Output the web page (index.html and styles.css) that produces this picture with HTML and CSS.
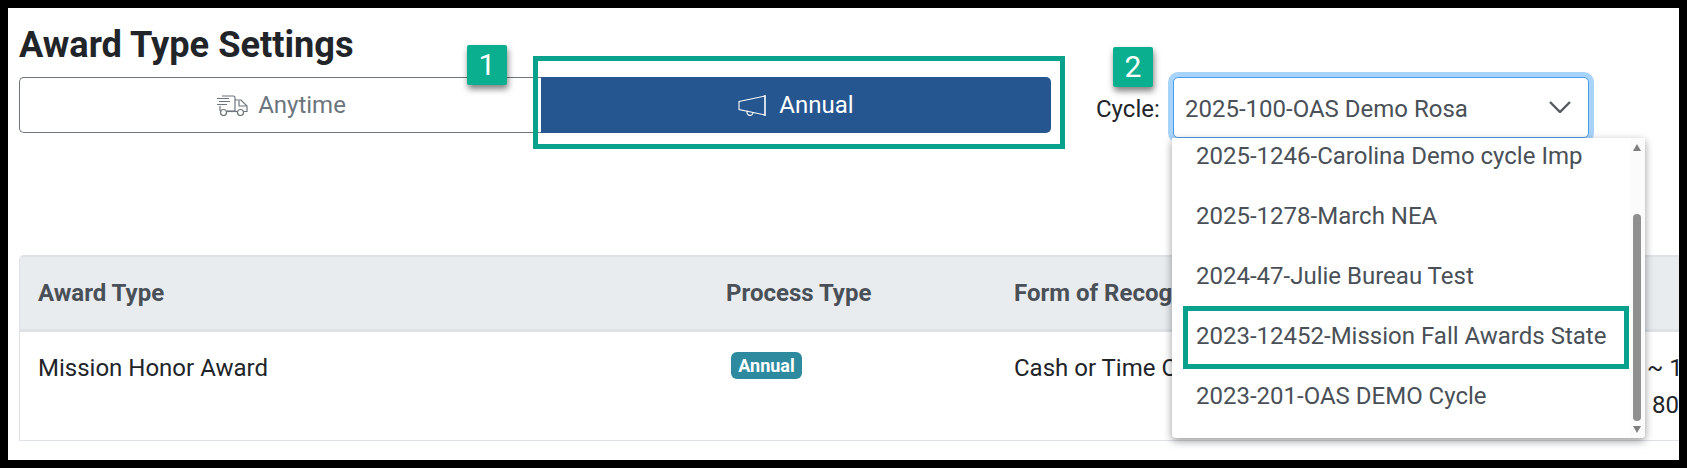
FILE: index.html
```html
<!DOCTYPE html>
<html lang="en">
<head>
<meta charset="utf-8">
<title>Award Type Settings</title>
<link rel="stylesheet" href="styles.css">
</head>
<body>
<div class="frame">
  <h1 class="title">Award Type Settings</h1>
  <div class="toolbar">
    <div class="toggle">
      <button class="toggle-btn toggle-off">
        <svg class="icon-truck" viewBox="0 0 31 21" fill="none" stroke="currentColor" stroke-width="1.200">
          <path d="M5 1H16.500Q18 1 18 2.500V16H10"/>
          <path d="M18 5H24L30 11V16.500H27"/>
          <path d="M22 5.500V11H29.500"/>
          <path d="M0 3.500H12M2 6.500H13M0 9.500H10M3 11V16"/>
          <circle cx="6.500" cy="17.500" r="3"/>
          <circle cx="23.500" cy="17.500" r="3"/>
          <path d="M10 16.500H20"/>
        </svg>
        <span>Anytime</span>
      </button>
      <button class="toggle-btn toggle-on">
        <svg class="icon-horn" viewBox="0 0 28 21" fill="none" stroke="currentColor" stroke-width="1.100">
          <path d="M1 6.500L27 1V20L1 14.500Z"/>
          <path d="M27 0V21"/>
          <path d="M9.500 15.800A3 3 0 1 0 15 17"/>
        </svg>
        <span>Annual</span>
        <i class="callout callout-annual"></i>
      </button>
    </div>
    <label class="cycle-label">Cycle:</label>
    <div class="select">
      <span class="select-value">2025-100-OAS Demo Rosa</span>
      <svg class="chevron" viewBox="0 0 22 12" fill="none" stroke="#555b61" stroke-width="2.400">
        <path d="M1 1L11 11L21 1"/>
      </svg>
      <div class="menu">
        <ul class="menu-list">
          <li class="menu-item">2025-1246-Carolina Demo cycle Imp</li>
          <li class="menu-item">2025-1278-March NEA</li>
          <li class="menu-item">2024-47-Julie Bureau Test</li>
          <li class="menu-item">2023-12452-Mission Fall Awards State<i class="callout callout-item"></i></li>
          <li class="menu-item">2023-201-OAS DEMO Cycle</li>
        </ul>
        <div class="scrollbar">
          <span class="arrow arrow-up"></span>
          <span class="thumb"></span>
          <span class="arrow arrow-down"></span>
        </div>
      </div>
    </div>
  </div>
  <div class="table">
    <div class="row head">
      <div class="cell">Award Type</div>
      <div class="cell">Process Type</div>
      <div class="cell">Form of Recognition</div>
      <div class="cell"></div>
    </div>
    <div class="row body">
      <div class="cell">Mission Honor Award</div>
      <div class="cell"><span class="pill">Annual</span></div>
      <div class="cell">Cash or Time Off</div>
      <div class="cell cell-clip">~ 1<br><span class="second">80</span></div>
    </div>
  </div>
  <div class="step step-1">1</div>
  <div class="step step-2">2</div>
</div>
</body>
</html>
```
FILE: styles.css
```css
* { box-sizing: border-box; }
html, body { margin: 0; padding: 0; background: #fff; }
.frame {
  position: relative;
  width: 1687px;
  height: 468px;
  border: 8px solid #000;
  padding: 0 0 0 11px;
  overflow: hidden;
  background: #fff;
  font-family: Roboto, "Liberation Sans", sans-serif;
  color: #212529;
}
.title {
  margin: 0;
  height: 69px;
  padding-top: 16px;
  font-size: 36.200px;
  line-height: 42px;
  font-weight: 700;
  color: #212529;
}
.toolbar { display: flex; align-items: flex-start; height: 56px; }
.toggle { display: flex; width: 1032px; height: 56px; }
.toggle-btn {
  position: relative;
  flex: 1 1 0;
  display: flex;
  align-items: center;
  justify-content: center;
  gap: 10px;
  font: 400 24px/1 Roboto, "Liberation Sans", sans-serif;
  cursor: pointer;
}
.toggle-off {
  background: #fff;
  color: #6c757d;
  border: 1px solid #6c757d;
  border-right: 0;
  border-radius: 5px 0 0 5px;
  padding-left: 8px;
  flex: 0 0 522px;
}
.toggle-on {
  gap: 13px;
  background: #26568f;
  color: #fff;
  border: 0;
  border-radius: 0 5px 5px 0;
}
.icon-truck { width: 31px; height: 21px; }
.icon-horn { width: 28px; height: 21px; }
.callout { position: absolute; border: 5px solid #08a18c; display: block; pointer-events: none; }
.callout-annual { left: -8px; right: -14px; top: -21px; bottom: -16px; }
.cycle-label { margin: 18px 0 0 45px; font-size: 24px; line-height: 28px; color: #212529; width: 77px; }
.select {
  position: relative;
  width: 416px;
  height: 61px;
  padding: 17px 0 0 11px;
  background: #fff;
  border: 1px solid #4a9be8;
  border-radius: 5px;
  box-shadow: 0 0 0 5px #a8d3fa;
  font-size: 24px;
  line-height: 28px;
  color: #495057;
}
.select-value { display: block; }
.chevron { position: absolute; right: 17px; top: 23px; width: 22px; height: 12px; }
.menu {
  position: absolute;
  left: -2px;
  top: 60px;
  width: 473px;
  height: 300px;
  background: #fff;
  border-radius: 0 0 4px 4px;
  box-shadow: 0 3px 8px rgba(0, 0, 0, 0.4);
  overflow: hidden;
  z-index: 2;
}
.menu-list { list-style: none; margin: -12px 0 0; padding: 0; }
.menu-item {
  position: relative;
  height: 60px;
  padding-left: 24px;
  font-size: 24px;
  line-height: 60px;
  color: #495057;
  white-space: nowrap;
}
.callout-item { left: 11px; width: 446px; top: 0; height: 63px; border-width: 5px; }
.scrollbar {
  position: absolute;
  right: 0;
  top: 0;
  bottom: 0;
  width: 15px;
  background: #fbfbfb;
}
.thumb {
  position: absolute;
  left: 3px;
  width: 8px;
  top: 76px;
  height: 207px;
  background: #8f8f8f;
  border-radius: 4px;
}
.arrow { position: absolute; left: 3px; width: 0; height: 0; border-left: 4px solid transparent; border-right: 4px solid transparent; }
.arrow-up { top: 6px; border-bottom: 7px solid #7f7f7f; }
.arrow-down { bottom: 5px; border-top: 7px solid #7f7f7f; }
.table {
  margin-top: 122px;
  width: 1700px;
  border-left: 1px solid #dee2e6;
  border-top: 2px solid #dee2e6;
  border-top-left-radius: 5px;
}
.row { display: grid; grid-template-columns: 688px 288px 651px 1fr; }
.cell { padding-left: 18px; }
.head {
  height: 75px;
  background: #e9ecef;
  border-bottom: 3px solid #dee2e6;
  font-size: 24px;
  font-weight: 700;
  line-height: 28px;
  color: #495057;
  align-items: start;
}
.head .cell { padding-top: 22px; }
.body {
  height: 109px;
  border-bottom: 1px solid #dee2e6;
  font-size: 24px;
  line-height: 37px;
  color: #212529;
}
.body .cell { padding-top: 18px; white-space: nowrap; }
.cell-clip { padding-left: 0; }
.second { padding-left: 5px; }
.pill {
  display: inline-block;
  margin: 2px 0 0 5px;
  height: 27px;
  width: 71px;
  background: #2e8b9f;
  color: #fff;
  border-radius: 6px;
  font-size: 18px;
  font-weight: 700;
  line-height: 27px;
  text-align: center;
  vertical-align: top;
}
.step {
  position: absolute;
  width: 40px;
  height: 40px;
  background: #0aaf8f;
  color: #fff;
  border-radius: 2px;
  box-shadow: 1px 4px 6px rgba(0, 0, 0, 0.5);
  font-size: 30px;
  line-height: 40px;
  text-align: center;
  z-index: 3;
}
.step-1 { left: 459px; top: 37px; }
.step-2 { left: 1105px; top: 39px; }
```
